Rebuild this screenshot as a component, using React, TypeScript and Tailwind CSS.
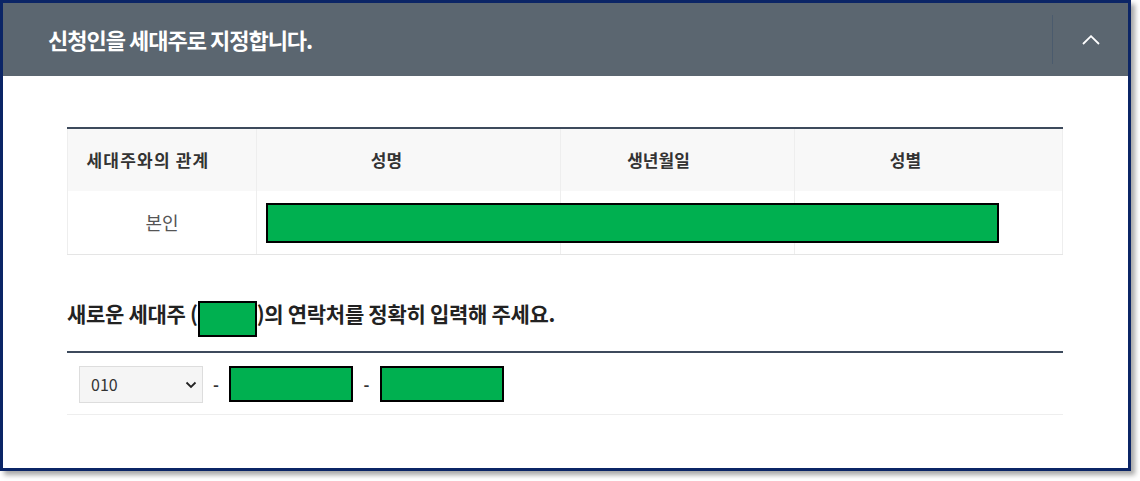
import React from "react";

const font = { fontFamily: '"Noto Sans CJK KR", "Noto Sans", sans-serif' };

const Redact: React.FC<{ className?: string }> = ({ className = "" }) => (
  <div className={`bg-[#00b050] border-2 border-black ${className}`} />
);

const App: React.FC = () => {
  return (
    <div className="w-[1140px] h-[481px] bg-white" style={font}>
      <div className="w-[1131px] h-[471px] border-[3px] border-[#0b2566] shadow-[4px_4px_5px_rgba(0,0,0,0.35)] flex flex-col">
        {/* Header */}
        <div className="h-[73px] bg-[#5b6670] flex items-center">
          <h2 className="flex-1 pl-[45px] text-white text-[22px] font-bold tracking-[-1px]">
            신청인을 세대주로 지정합니다.
          </h2>
          <div className="h-[49px] w-px bg-[#4b5b6d]" />
          <button className="w-[75px] h-full flex items-center justify-center" aria-label="접기">
            <svg width="18" height="10" viewBox="0 0 18 10" fill="none">
              <polyline points="1,9 9,1.2 17,9" stroke="white" strokeWidth="1.8" />
            </svg>
          </button>
        </div>

        {/* Content */}
        <div className="flex-1 bg-white pl-[64px] pr-[65px] pt-[51px]">
          {/* Table */}
          <div className="border-t-2 border-[#3d4a5c]">
            <div className="grid grid-cols-[189px_304px_234px_269px] h-[62px] bg-[#f8f8f8] text-[#333] text-[17px] font-semibold">
              <div className="flex items-center justify-center pr-[28px] border-l border-[#eeeeee] tracking-[1.2px]">세대주와의 관계</div>
              <div className="flex items-center justify-center pr-[44px] border-l border-[#eeeeee]">성명</div>
              <div className="flex items-center justify-center pr-[38px] border-l border-[#eeeeee]">생년월일</div>
              <div className="flex items-center justify-center pr-[46px] border-l border-r border-[#eeeeee]">성별</div>
            </div>
            <div className="relative grid grid-cols-[189px_304px_234px_269px] h-[64px] border-b border-[#e5e5e5] text-[#555] text-[18px]">
              <div className="flex items-center justify-center border-l border-[#eeeeee]">본인</div>
              <div className="border-l border-[#eeeeee]" />
              <div className="border-l border-[#eeeeee]" />
              <div className="border-l border-r border-[#eeeeee]" />
              <Redact className="absolute left-[199px] top-[12px] w-[733px] h-[40px]" />
            </div>
          </div>

          {/* Contact */}
          <div className="mt-[43px] flex items-start text-[#222] text-[21px] font-bold tracking-[-0.3px]">
            <span className="h-[30px] leading-[30px]">새로운 세대주 (</span>
            <Redact className="mt-[3px] w-[59px] h-[36px]" />
            <span className="h-[30px] leading-[30px]">)의 연락처를 정확히 입력해 주세요.</span>
          </div>

          <div className="mt-[14px] border-t-2 border-[#3d4a5c]">
            <div className="h-[62px] flex items-center pl-[12px] border-b border-[#eeeeee] pt-[1px]">
              <div className="relative w-[124px] h-[37px]">
                <select
                  defaultValue="010"
                  className="appearance-none w-full h-full bg-[#f5f5f5] border border-[#dddddd] pl-[11px] text-[16px] text-[#333] outline-none"
                  style={font}
                >
                  <option>010</option>
                  <option>011</option>
                  <option>016</option>
                  <option>017</option>
                  <option>019</option>
                </select>
                <svg
                  className="absolute right-[6px] top-[15px] pointer-events-none"
                  width="12"
                  height="8"
                  viewBox="0 0 12 8"
                  fill="none"
                >
                  <polyline points="1.5,1.5 6,6 10.5,1.5" stroke="#222" strokeWidth="1.8" />
                </svg>
              </div>
              <span className="w-[26px] text-center text-[#333] text-[16px] font-bold">-</span>
              <Redact className="w-[124px] h-[36px]" />
              <span className="w-[27px] text-center text-[#333] text-[16px] font-bold">-</span>
              <Redact className="w-[124px] h-[36px]" />
            </div>
          </div>
        </div>
      </div>
    </div>
  );
};

export default App;
